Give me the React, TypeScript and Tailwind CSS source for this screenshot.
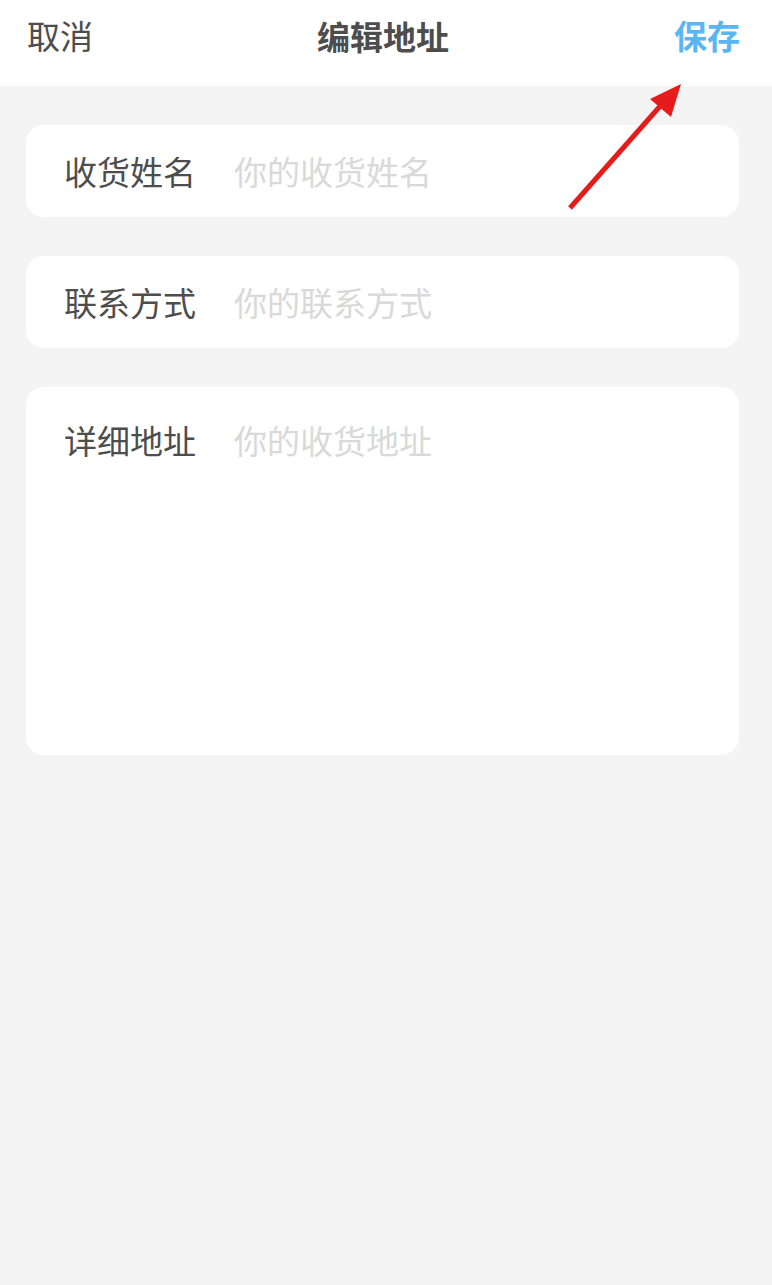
const FONT = { fontFamily: '"Noto Sans CJK SC", "Noto Sans", sans-serif' };

function Field({ label, placeholder, tall }: { label: string; placeholder: string; tall?: boolean }) {
  return (
    <div
      className={`ml-[26px] mr-[33px] bg-white rounded-[18px] pl-[38px] pr-[39px] flex ${
        tall ? "h-[368px] items-start pt-[30px]" : "h-[92px] items-center"
      }`}
    >
      <span className="text-[33px] leading-[46px] text-[#4d4d4d] w-[170px] shrink-0">{label}</span>
      <span className="text-[33px] leading-[46px] text-[#d9d9d9]">{placeholder}</span>
    </div>
  );
}

export default function App() {
  return (
    <div className="relative w-[772px] h-[1285px] bg-[#f4f4f4] overflow-hidden" style={FONT}>
      <header className="h-[86px] bg-white flex items-center justify-between pl-[27px] pr-[32px] pb-[14px] relative">
        <span className="text-[33px] text-[#4d4d4d]">取消</span>
        <span className="absolute left-[317px] top-[12px] text-[33px] font-bold text-[#4d4d4d]">编辑地址</span>
        <span className="text-[33px] font-bold text-[#5ab6f3]">保存</span>
      </header>

      <main className="flex flex-col gap-[39px] pt-[39px]">
        <Field label="收货姓名" placeholder="你的收货姓名" />
        <Field label="联系方式" placeholder="你的联系方式" />
        <Field label="详细地址" placeholder="你的收货地址" tall />
      </main>

      {/* red annotation arrow */}
      <svg className="absolute left-0 top-0 pointer-events-none" width="772" height="240" viewBox="0 0 772 240">
        <line x1="570" y1="208" x2="662" y2="104" stroke="#e51c1c" strokeWidth="5" />
        <polygon points="681,84 671,117 650,99" fill="#e51c1c" />
      </svg>
    </div>
  );
}
